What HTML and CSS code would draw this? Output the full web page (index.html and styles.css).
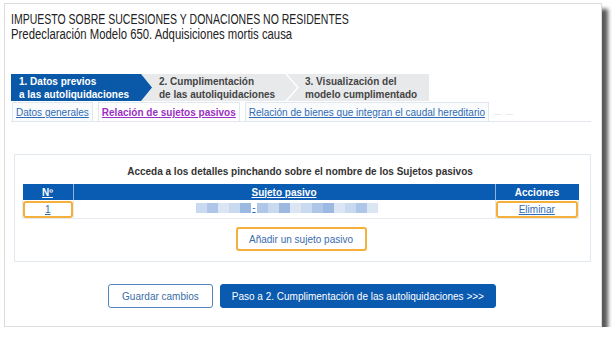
FILE: index.html
```html
<!DOCTYPE html>
<html lang="es">
<head>
    <meta charset="UTF-8">
    <meta name="viewport" content="width=device-width, initial-scale=1.0">
    <title>Modelo 650</title>
    <link rel="stylesheet" href="styles.css">
</head>
<body>
    <div class="page">
        <div class="header">
            <h1><span class="t1">IMPUESTO SOBRE SUCESIONES Y DONACIONES NO RESIDENTES</span></h1>
            <h2><span class="t2">Predeclaración Modelo 650. Adquisiciones mortis causa</span></h2>
        </div>

        <!-- Pasos -->
        <div class="steps">
            <div class="step step-1 active">1. Datos previos<br>a las autoliquidaciones</div>
            <div class="step step-2">2. Cumplimentación<br>de las autoliquidaciones</div>
            <div class="step step-3">3. Visualización del<br>modelo cumplimentado</div>
        </div>

        <!-- Pestañas -->
        <div class="tabs">
            <a class="tab" href="#">Datos generales</a>
            <a class="tab current" href="#">Relación de sujetos pasivos</a>
            <a class="tab" href="#">Relación de bienes que integran el caudal hereditario</a>
            <span class="tab-stub"></span>
            <span class="tab-stub"></span>
        </div>

        <div class="panel">
            <p class="hint">Acceda a los detalles pinchando sobre el nombre de los Sujetos pasivos</p>
            <table class="grid">
                <thead>
                    <tr>
                        <th class="col-num"><a href="#">Nº</a></th>
                        <th class="col-name"><a href="#">Sujeto pasivo</a></th>
                        <th class="col-act">Acciones</th>
                    </tr>
                </thead>
                <tbody>
                    <tr>
                        <td><span class="mark"><a href="#">1</a></span></td>
                        <td>
                            <span class="blur">
                                <i class="px a"></i><i class="px b"></i><i class="px c"></i><i class="px a"></i><i class="px d"></i>
                                <a class="dash" href="#">-</a>
                                <i class="px b"></i><i class="px a"></i><i class="px d"></i><i class="px c"></i><i class="px a"></i><i class="px b"></i><i class="px d"></i><i class="px c"></i><i class="px a"></i><i class="px b"></i><i class="px c"></i>
                            </span>
                        </td>
                        <td><span class="mark"><a href="#">Eliminar</a></span></td>
                    </tr>
                </tbody>
            </table>
            <div class="add-row">
                <button class="add">Añadir un sujeto pasivo</button>
            </div>
        </div>

        <div class="actions">
            <button class="btn">Guardar cambios</button>
            <button class="btn primary">Paso a 2. Cumplimentación de las autoliquidaciones &gt;&gt;&gt;</button>
        </div>
    </div>
</body>
</html>
```

FILE: styles.css
```css
body {
    margin: 0;
    padding: 3px 0 0 4px;
    background: #fff;
    font-family: "Liberation Sans", Arial, sans-serif;
    color: #333;
}
.page {
    width: 598px;
    height: 324px;
    box-sizing: border-box;
    border: 1px solid #dcdcdc;
    background: #fff;
    box-shadow: 6px 6px 4px rgba(0,0,0,0.65);
    padding: 0 0 0 6px;
}
a {
    color: #2f6bb5;
}
.header {
    padding-top: 8px;
    height: 62px;
}
.header h1, .header h2 {
    margin: 0;
    font-size: 14px;
    font-weight: normal;
    line-height: 15px;
    height: 15px;
    color: #222;
    white-space: nowrap;
}
/* the original uses a condensed face */
.t1, .t2 {
    display: inline-block;
    transform-origin: left center;
}
.t1 { transform: scaleX(0.75); }
.t2 { transform: scaleX(0.81); }

/* Steps */
.steps {
    display: flex;
    height: 27px;
}
.step {
    height: 27px;
    box-sizing: border-box;
    padding-top: 1px;
    font-size: 10px;
    font-weight: bold;
    line-height: 13px;
    color: #444;
    background: #e8e9eb;
}
.step-1 {
    width: 141px;
    padding-left: 8px;
    background: #0a58a8;
    color: #fff;
    position: relative;
    z-index: 1;
    clip-path: polygon(0 0, calc(100% - 11px) 0, 100% 50%, calc(100% - 11px) 100%, 0 100%);
}
.step-2 {
    width: 157px;
    margin-left: -12px;
    padding-left: 19px;
    clip-path: polygon(0 0, calc(100% - 12px) 0, 100% 50%, calc(100% - 12px) 100%, 0 100%);
}
.step-3 {
    width: 142px;
    margin-left: -10px;
    padding-left: 18px;
    clip-path: polygon(0 0, 100% 0, 100% 100%, 0 100%, 12px 50%);
}

/* Tabs */
.tabs {
    display: flex;
    align-items: flex-end;
    gap: 5px;
    width: 580px;
    height: 20px;
    margin-top: 1px;
    padding-left: 1px;
    box-sizing: border-box;
    border-bottom: 1px solid #e3e8ef;
}
.tab {
    height: 19px;
    box-sizing: border-box;
    padding: 4px 3px 0;
    border: 1px solid #e1e7ef;
    border-bottom: none;
    font-size: 10px;
    line-height: 12px;
    color: #2f6bb5;
    background: #fafbfc;
}
.tab.current {
    color: #9b2fc4;
    font-weight: bold;
    background: #fff;
}
.tab-stub {
    width: 7px;
    height: 3px;
    margin-bottom: 3px;
    border-top: 1px solid #e6e9ee;
}

/* Panel */
.panel {
    width: 577px;
    height: 108px;
    box-sizing: border-box;
    margin: 32px 0 0 3px;
    padding: 0 12px 0 7px;
    border: 1px solid #e2e8f0;
}
.hint {
    margin: 11px 0 6px;
    text-align: center;
    font-size: 10px;
    font-weight: bold;
    line-height: 12px;
    color: #333;
}
.grid {
    width: 557px;
    border-collapse: collapse;
    font-size: 10px;
}
.grid th {
    height: 16px;
    padding: 0;
    background: #0a5cb2;
    color: #fff;
    font-weight: bold;
    border-left: 1px solid #8fb2dc;
}
.grid th:first-child {
    border-left: none;
}
.grid th a {
    color: #fff;
}
.col-num { width: 50px; }
.col-act { width: 83px; }
.grid td {
    height: 18px;
    padding: 0;
    text-align: center;
    border: 1px solid #e6ebf1;
    border-top: none;
}
.mark {
    display: block;
    height: 17px;
    box-sizing: border-box;
    padding-top: 1px;
    border: 2px solid #f4b03a;
    border-radius: 3px;
}
.blur {
    display: inline-flex;
    align-items: center;
    height: 10px;
    margin-left: 6px;
}
.px {
    display: block;
    width: 11px;
    height: 10px;
}
.px.a { background: #c9d9ef; }
.px.b { background: #aec6e7; }
.px.c { background: #dbe5f3; }
.px.d { background: #9cb9e2; }
.dash {
    margin: 0 1px;
    line-height: 10px;
}
.add-row {
    display: flex;
    justify-content: center;
    margin-top: 8px;
}
.add {
    width: 131px;
    height: 24px;
    padding: 0;
    margin-left: 2px;
    border: 2px solid #f4b03a;
    border-radius: 3px;
    background: #fff;
    font-family: "Liberation Sans", Arial, sans-serif;
    font-size: 10px;
    color: #3a6cae;
}

/* Bottom actions */
.actions {
    display: flex;
    justify-content: center;
    gap: 7px;
    margin-top: 22px;
    padding-right: 8px;
}
.btn {
    height: 24px;
    padding: 0 13px;
    border: 1px solid #4f82c2;
    border-radius: 3px;
    background: #fff;
    font-family: "Liberation Sans", Arial, sans-serif;
    font-size: 10px;
    color: #3a6ca8;
    cursor: pointer;
}
.btn.primary {
    padding: 0 11px;
    border-color: #0a5ab0;
    background: #0a5ab0;
    color: #fff;
}
```
